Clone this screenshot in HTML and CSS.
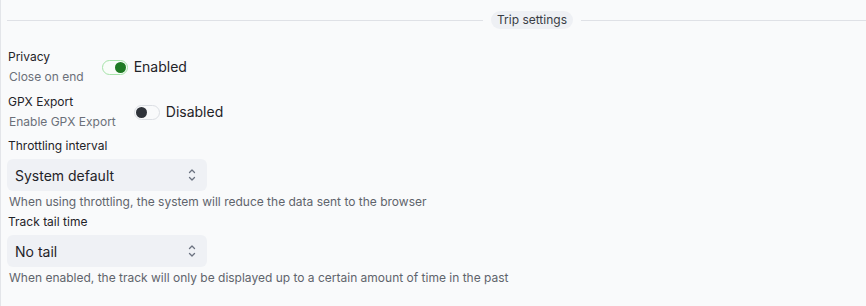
FILE: index.html
```html
<!DOCTYPE html>
<html>
<head>
<meta charset="utf-8">
<link rel="stylesheet" href="styles.css">
</head>
<body>
<div class="panel">
  <div class="divider">
    <span class="line line-left"></span>
    <span class="pill">Trip settings</span>
    <span class="line line-right"></span>
  </div>

  <div class="setting first">
    <div class="texts">
      <div class="title">Privacy</div>
      <div class="desc">Close on end</div>
    </div>
    <label class="toggle-wrap">
      <span class="toggle on"><span class="knob"></span></span>
      <span class="toggle-label">Enabled</span>
    </label>
  </div>

  <div class="setting">
    <div class="texts">
      <div class="title">GPX Export</div>
      <div class="desc">Enable GPX Export</div>
    </div>
    <label class="toggle-wrap">
      <span class="toggle off"><span class="knob"></span></span>
      <span class="toggle-label">Disabled</span>
    </label>
  </div>

  <div class="field">
    <div class="title">Throttling interval</div>
    <div class="select">
      <span>System default</span>
      <svg class="chev" width="8" height="14" viewBox="0 0 8 14"><path d="M1.5 4.5 L4 2 L6.5 4.5 M1.5 9.5 L4 12 L6.5 9.5" fill="none" stroke="#6b7280" stroke-width="1.3" stroke-linecap="round" stroke-linejoin="round"/></svg>
    </div>
    <div class="help">When using throttling, the system will reduce the data sent to the browser</div>
  </div>

  <div class="field second">
    <div class="title">Track tail time</div>
    <div class="select">
      <span>No tail</span>
      <svg class="chev" width="8" height="14" viewBox="0 0 8 14"><path d="M1.5 4.5 L4 2 L6.5 4.5 M1.5 9.5 L4 12 L6.5 9.5" fill="none" stroke="#6b7280" stroke-width="1.3" stroke-linecap="round" stroke-linejoin="round"/></svg>
    </div>
    <div class="help">When enabled, the track will only be displayed up to a certain amount of time in the past</div>
  </div>
</div>
</body>
</html>
```

FILE: styles.css
```css
html, body {
  margin: 0;
  padding: 0;
  background: #f9fafb;
  height: 100%;
  overflow: hidden;
}
body {
  font-family: Inter, "Noto Sans", sans-serif;
  color: #1f2328;
}
.panel {
  border-left: 1px solid #e3e5e9;
  height: 306px;
  box-sizing: border-box;
  padding: 0 0 0 6px;
}
.divider {
  display: flex;
  align-items: center;
  height: 18px;
  padding-top: 11px;
}
.line {
  height: 1px;
  background: #dfe1e6;
}
.line-left {
  width: 476px;
  flex: 0 0 476px;
}
.line-right {
  flex: 1;
}
.pill {
  margin: 0 8px;
  height: 18px;
  line-height: 18px;
  padding: 0 6px;
  border-radius: 9px;
  background: #eef0f4;
  font-size: 12px;
  color: #383c44;
  white-space: nowrap;
}
.setting {
  display: flex;
  align-items: center;
  gap: 18px;
  margin-top: 9px;
}
.setting.first {
  margin-top: 20px;
}
.texts {
  display: flex;
  flex-direction: column;
}
.title {
  font-size: 12px;
  line-height: 16px;
  color: #1f2328;
  padding-left: 1px;
}
.desc {
  font-size: 12px;
  line-height: 16px;
  margin-top: 4px;
  color: #6b7079;
  padding-left: 2px;
}
.toggle-wrap {
  display: inline-flex;
  align-items: center;
  gap: 6px;
}
.toggle {
  box-sizing: border-box;
  width: 26px;
  height: 15px;
  border-radius: 8px;
  display: flex;
  align-items: center;
  padding: 0 1px;
}
.toggle.on {
  border: 1px solid #a6e3a9;
  justify-content: flex-end;
  background: #f9fdf9;
}
.toggle.off {
  border: 1px solid #dcdfe4;
  justify-content: flex-start;
  background: #f9fafb;
}
.knob {
  width: 11px;
  height: 11px;
  border-radius: 50%;
}
.on .knob { background: #1e7a23; }
.off .knob { background: #2f333a; }
.toggle-label {
  font-size: 14px;
  line-height: 16px;
  color: #1f2328;
}
.field {
  margin-top: 8px;
}
.field.second {
  margin-top: 4px;
}
.select {
  margin-top: 5px;
  width: 200px;
  height: 32px;
  box-sizing: border-box;
  background: #eff1f5;
  border-radius: 6px;
  display: flex;
  align-items: center;
  justify-content: space-between;
  padding: 0 11px 0 8px;
  font-size: 14px;
  color: #1f2328;
}
.chev {
  display: block;
}
.help {
  margin-top: 3px;
  font-size: 12px;
  line-height: 16px;
  color: #5f646c;
  padding-left: 2px;
  white-space: nowrap;
}
```
